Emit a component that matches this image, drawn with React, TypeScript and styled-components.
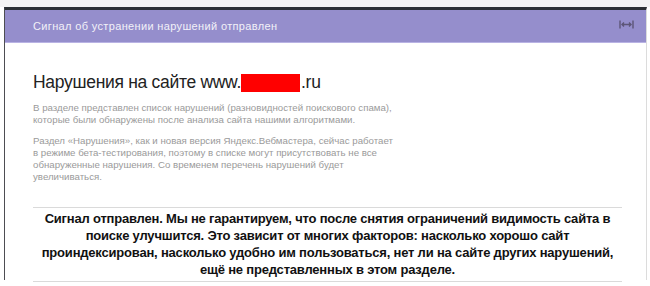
import * as React from "react";
import styled, { createGlobalStyle } from "styled-components";

const GlobalStyle = createGlobalStyle`
  html, body {
    margin: 0;
    padding: 0;
    background: #ffffff;
  }
  body {
    font-family: "Liberation Sans", Arial, sans-serif;
  }
`;

const Page = styled.div`
  width: 650px;
  height: 286px;
  box-sizing: border-box;
  padding: 7px 3px 0 4px;
  background: linear-gradient(#f3f3f3, #f3f3f3) top / 100% 7px no-repeat, #fff;
  overflow: hidden;
`;

const Panel = styled.div`
  height: 273px;
  box-sizing: border-box;
  border-top: 3px solid #2c3035;
  border-left: 1px solid #4d4d52;
  border-right: 1px solid #dcdcdc;
  background: #fff;
  display: flex;
  flex-direction: column;
`;

const Header = styled.div`
  height: 33px;
  flex-shrink: 0;
  box-sizing: border-box;
  display: flex;
  align-items: center;
  justify-content: space-between;
  padding: 0 12px 0 28px;
  background: #958ecc;
  border-bottom: 1px solid #b9b3e4;
`;

const HeaderTitle = styled.span`
  color: #f2f1f8;
  font-size: 11px;
  letter-spacing: 0.35px;
`;

const ExpandIcon = styled.svg`
  width: 15px;
  height: 9px;
  margin-top: -4px;
`;

const Body = styled.div`
  padding: 0 24px 0 28px;
  display: flex;
  flex-direction: column;
`;

const Title = styled.h1`
  margin: 28px 0 0;
  font-size: 17.5px;
  letter-spacing: -0.3px;
  font-weight: normal;
  color: #222;
  line-height: 22px;
  display: flex;
  align-items: center;
`;

const Masked = styled.span`
  display: inline-block;
  width: 59px;
  height: 18px;
  background: #ff0000;
  margin: 1px 1px 0 0;
`;

const Note = styled.p`
  margin: 9px 0 0;
  font-size: 9.7px;
  line-height: 12px;
  color: #9a9a9a;
  white-space: nowrap;
`;

const Notice = styled.div`
  margin-top: 24px;
  border-top: 1px solid #dadada;
  border-bottom: 1px solid #dadada;
  padding: 2px 4px 3px;
  text-align: center;
  font-size: 13px;
  letter-spacing: -0.2px;
  font-weight: bold;
  line-height: 17px;
  color: #111;
`;

const App: React.FunctionComponent = (): JSX.Element => {
  return (
    <>
      <GlobalStyle />
      <Page>
        <Panel>
          <Header>
            <HeaderTitle>Сигнал об устранении нарушений отправлен</HeaderTitle>
            <ExpandIcon viewBox="0 0 15 9">
              <path
                d="M1 0.5v8M14 0.5v8M3 4.5h9M5 2.5L3 4.5l2 2M10 2.5l2 2-2 2"
                stroke="#5d5678"
                strokeWidth="1.4"
                fill="none"
              />
            </ExpandIcon>
          </Header>
          <Body>
            <Title>
              Нарушения на сайте www.
              <Masked />
              .ru
            </Title>
            <Note>
              В разделе представлен список нарушений (разновидностей поискового спама),
              <br />
              которые были обнаружены после анализа сайта нашими алгоритмами.
            </Note>
            <Note>
              Раздел «Нарушения», как и новая версия Яндекс.Вебмастера, сейчас работает
              <br />
              в режиме бета-тестирования, поэтому в списке могут присутствовать не все
              <br />
              обнаруженные нарушения. Со временем перечень нарушений будет
              <br />
              увеличиваться.
            </Note>
            <Notice>
              Сигнал отправлен. Мы не гарантируем, что после снятия ограничений видимость сайта в
              поиске улучшится. Это зависит от многих факторов: насколько хорошо сайт
              проиндексирован, насколько удобно им пользоваться, нет ли на сайте других нарушений,
              ещё не представленных в этом разделе.
            </Notice>
          </Body>
        </Panel>
      </Page>
    </>
  );
};

export default App;
